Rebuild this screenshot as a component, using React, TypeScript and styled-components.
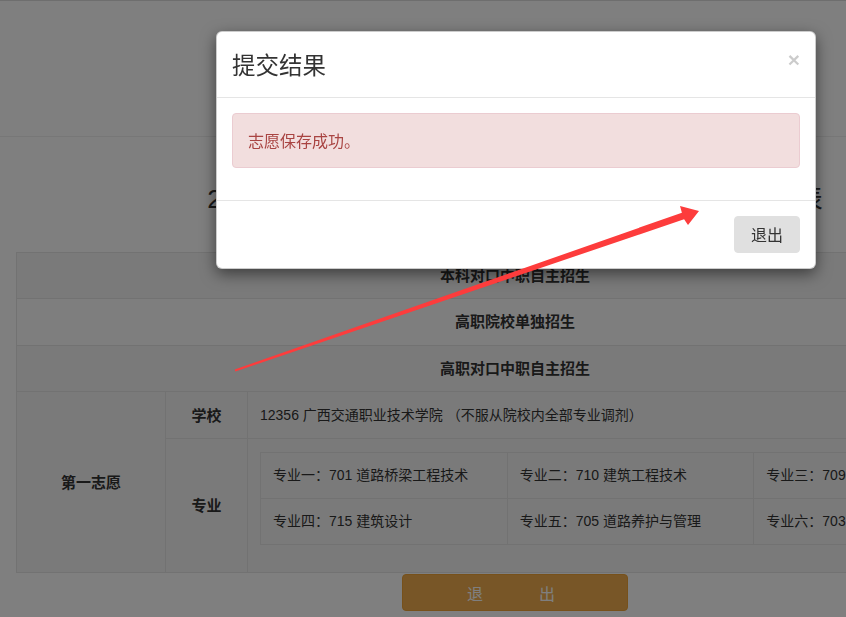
import styled, { createGlobalStyle } from 'styled-components';

const GlobalStyle = createGlobalStyle`
  html, body {
    margin: 0;
    padding: 0;
    overflow: hidden;
    background: #fff;
  }
  body {
    font-family: "Liberation Sans", "Noto Sans CJK SC", sans-serif;
    color: #333;
  }
`;

const Page = styled.div`
  position: relative;
  width: 1030px;
  min-height: 617px;
`;

const Header = styled.div`
  height: 135px;
  border-top: 1px solid #ddd;
  border-bottom: 1px solid #eee;
`;

const Content = styled.div`
  padding: 0 16px;
`;

const Title = styled.h2`
  margin: 47px 0 37px;
  text-align: center;
  font-size: 26.5px;
  line-height: 31px;
  font-weight: 400;
  color: #333;
`;

const Table = styled.table`
  width: 100%;
  border-collapse: collapse;
  background: #f5f5f5;
  table-layout: fixed;
`;

const Row = styled.tr<{ light?: boolean }>`
  background: ${props => props.light ? '#fcfcfc' : 'transparent'};
`;

const GroupCell = styled.td`
  padding: 12px;
  border: 1px solid #e4e4e4;
  text-align: center;
  font-size: 15px;
  line-height: 21.4px;
  font-weight: 700;
`;

const LabelCell = styled.td`
  padding: 12px;
  border: 1px solid #e4e4e4;
  text-align: center;
  vertical-align: middle;
  font-size: 15px;
  line-height: 21px;
  font-weight: 700;
`;

const TextCell = styled.td`
  padding: 13px 12px 12px;
  border: 1px solid #e4e4e4;
  font-size: 14px;
  line-height: 21px;
  white-space: nowrap;
`;

const InnerTable = styled.table`
  width: 100%;
  margin-bottom: 15px;
  border-collapse: collapse;
  table-layout: fixed;
`;

const InnerCell = styled.td`
  padding: 12px;
  border: 1px solid #e4e4e4;
  font-size: 14px;
  line-height: 21px;
  white-space: nowrap;
  overflow: hidden;
`;

const ButtonBar = styled.div`
  display: flex;
  justify-content: center;
  padding-top: 1px;
`;

const ExitButton = styled.button`
  width: 226px;
  height: 37px;
  padding: 0;
  border: 1px solid #eea236;
  border-radius: 4px;
  background: #f0ad4e;
  color: #fff;
  font-family: "Noto Sans CJK SC", sans-serif;
  font-size: 16px;
  letter-spacing: 8px;
`;

const Backdrop = styled.div`
  position: fixed;
  inset: 0;
  background: rgba(0, 0, 0, 0.5);
  z-index: 1040;
`;

const ModalLayer = styled.div`
  position: absolute;
  top: 0;
  left: 0;
  width: 1032px;
  z-index: 1050;
`;

const ModalContent = styled.div`
  width: 598px;
  margin: 31px auto 0;
  background: #fff;
  border: 1px solid rgba(0, 0, 0, 0.2);
  border-radius: 6px;
  box-shadow: 0 5px 15px rgba(0, 0, 0, 0.5);
`;

const ModalHeader = styled.div`
  display: flex;
  justify-content: space-between;
  align-items: flex-start;
  padding: 15px;
  border-bottom: 1px solid #e5e5e5;
`;

const ModalTitle = styled.h4`
  margin: 0;
  font-family: "Noto Sans CJK SC", sans-serif;
  font-size: 23.5px;
  line-height: 35px;
  font-weight: 400;
  color: #333;
`;

const CloseButton = styled.button`
  padding: 0;
  margin-top: 2px;
  border: 0;
  background: transparent;
  font-family: "Liberation Sans", sans-serif;
  font-size: 21px;
  line-height: 1;
  font-weight: 700;
  color: #000;
  opacity: 0.2;
`;

const ModalBody = styled.div`
  padding: 15px;
`;

const Alert = styled.div`
  margin-bottom: 17px;
  padding: 15px;
  border: 1px solid #ebccd1;
  border-radius: 4px;
  background: #f2dede;
  color: #a94442;
  font-family: "Noto Sans CJK SC", sans-serif;
  font-size: 16px;
  line-height: 23px;
`;

const ModalFooter = styled.div`
  display: flex;
  justify-content: flex-end;
  padding: 15px;
  border-top: 1px solid #e5e5e5;
`;

const DefaultButton = styled.button`
  padding: 6px 16px;
  border: 1px solid #e0e0e0;
  border-radius: 4px;
  background: #e0e0e0;
  color: #333;
  font-family: "Noto Sans CJK SC", sans-serif;
  font-size: 16px;
  line-height: 23px;
`;

const ArrowLayer = styled.svg`
  position: fixed;
  top: 0;
  left: 0;
  z-index: 1060;
  pointer-events: none;
`;

const majors = [
  ['专业一：701 道路桥梁工程技术', '专业二：710 建筑工程技术', '专业三：709 市政工程技术'],
  ['专业四：715 建筑设计', '专业五：705 道路养护与管理', '专业六：703 工程测量技术'],
];

const App = () => {
  return (
    <Page>
      <GlobalStyle />
      <Header />
      <Content>
        <Title>2024年广西中职学校毕业生对口升学考试志愿填报表</Title>
        <Table>
          <colgroup>
            <col style={{ width: 149 }} />
            <col style={{ width: 82 }} />
            <col />
          </colgroup>
          <tbody>
            <Row>
              <GroupCell colSpan={3}>本科对口中职自主招生</GroupCell>
            </Row>
            <Row light>
              <GroupCell colSpan={3}>高职院校单独招生</GroupCell>
            </Row>
            <Row>
              <GroupCell colSpan={3}>高职对口中职自主招生</GroupCell>
            </Row>
            <Row>
              <LabelCell rowSpan={2}>第一志愿</LabelCell>
              <LabelCell>学校</LabelCell>
              <TextCell>12356 广西交通职业技术学院 （不服从院校内全部专业调剂）</TextCell>
            </Row>
            <Row>
              <LabelCell>专业</LabelCell>
              <TextCell>
                <InnerTable>
                  <tbody>
                    {majors.map((line, i) => (
                      <tr key={i}>
                        {line.map(m => (
                          <InnerCell key={m}>{m}</InnerCell>
                        ))}
                      </tr>
                    ))}
                  </tbody>
                </InnerTable>
              </TextCell>
            </Row>
          </tbody>
        </Table>
        <ButtonBar>
          <ExitButton>退　　出</ExitButton>
        </ButtonBar>
      </Content>

      <Backdrop />
      <ModalLayer>
        <ModalContent>
          <ModalHeader>
            <ModalTitle>提交结果</ModalTitle>
            <CloseButton>×</CloseButton>
          </ModalHeader>
          <ModalBody>
            <Alert>志愿保存成功。</Alert>
          </ModalBody>
          <ModalFooter>
            <DefaultButton>退出</DefaultButton>
          </ModalFooter>
        </ModalContent>
      </ModalLayer>

      <ArrowLayer width="846" height="617" viewBox="0 0 846 617">
        <polygon
          points="234.7,369.6 681.9,212.7 680,206 699,211 688,225 684.1,219.3 235.3,371.4"
          fill="#fd3c3c"
        />
      </ArrowLayer>
    </Page>
  );
};

export default App;
